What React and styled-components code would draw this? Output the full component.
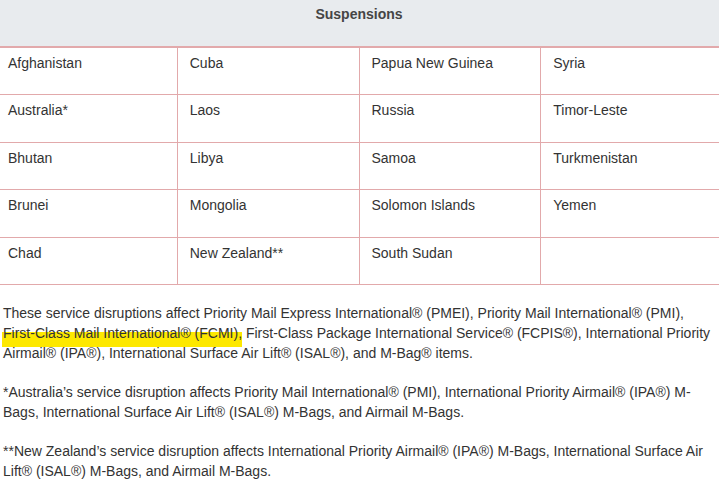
import React from 'react';
import styled, { createGlobalStyle } from 'styled-components';

const GlobalStyle = createGlobalStyle`
  html, body {
    margin: 0;
    padding: 0;
    background: #fff;
    overflow: hidden;
  }
  body {
    font-family: "Liberation Sans", Arial, sans-serif;
    font-size: 14px;
    color: #333;
  }
`;

const Page = styled.div`
  width: 719px;
  height: 488px;
  overflow: hidden;
`;

const Table = styled.table`
  width: 728px;
  margin-left: -5px;
  border-collapse: collapse;
  table-layout: fixed;
`;

const HeadCell = styled.th`
  height: 47px;
  box-sizing: border-box;
  padding: 6px 12px 0;
  vertical-align: top;
  text-align: center;
  font-weight: bold;
  font-size: 14px;
  line-height: 17px;
  color: #454545;
  background: #e8ebee;
  border-bottom: 2px solid #e2a9ab;
`;

const Cell = styled.td`
  height: 47.6px;
  box-sizing: border-box;
  padding: 5px 12px 0;
  vertical-align: top;
  line-height: 20px;
  color: #333;
  border: 1px solid #e2a9ab;
`;

const Notes = styled.div`
  padding: 18px 0 0 3px;
  width: 712px;
`;

const Note = styled.p`
  margin: 0 0 19px;
  line-height: 20px;
  color: #333;
`;

// marker highlight drawn behind the text, sitting low like a pen stroke
const Mark = styled.span`
  position: relative;
  isolation: isolate;

  &::after {
    content: '';
    position: absolute;
    left: -1px;
    right: 0;
    top: 7px;
    bottom: -6px;
    background: #fde800;
    z-index: -1;
  }
`;

const rows = [
  ['Afghanistan', 'Cuba', 'Papua New Guinea', 'Syria'],
  ['Australia*', 'Laos', 'Russia', 'Timor-Leste'],
  ['Bhutan', 'Libya', 'Samoa', 'Turkmenistan'],
  ['Brunei', 'Mongolia', 'Solomon Islands', 'Yemen'],
  ['Chad', 'New Zealand**', 'South Sudan', ''],
];

const App = () => (
  <Page>
    <GlobalStyle />
    <Table>
      <thead>
        <tr>
          <HeadCell colSpan={4}>Suspensions</HeadCell>
        </tr>
      </thead>
      <tbody>
        {rows.map((row, i) => (
          <tr key={i}>
            {row.map((name, j) => (
              <Cell key={j}>{name}</Cell>
            ))}
          </tr>
        ))}
      </tbody>
    </Table>
    <Notes>
      <Note>
        These service disruptions affect Priority Mail Express International® (PMEI), Priority Mail
        International® (PMI), <Mark>First-Class Mail International® (FCMI),</Mark> First-Class Package
        International Service® (FCPIS®), International Priority Airmail® (IPA®), International Surface
        Air Lift® (ISAL®), and M-Bag® items.
      </Note>
      <Note>
        *Australia’s service disruption affects Priority Mail International® (PMI), International
        Priority Airmail® (IPA®) M-Bags, International Surface Air Lift® (ISAL®) M-Bags, and Airmail
        M-Bags.
      </Note>
      <Note>
        **New Zealand’s service disruption affects International Priority Airmail® (IPA®) M-Bags,
        International Surface Air Lift® (ISAL®) M-Bags, and Airmail M-Bags.
      </Note>
    </Notes>
  </Page>
);

export default App;
